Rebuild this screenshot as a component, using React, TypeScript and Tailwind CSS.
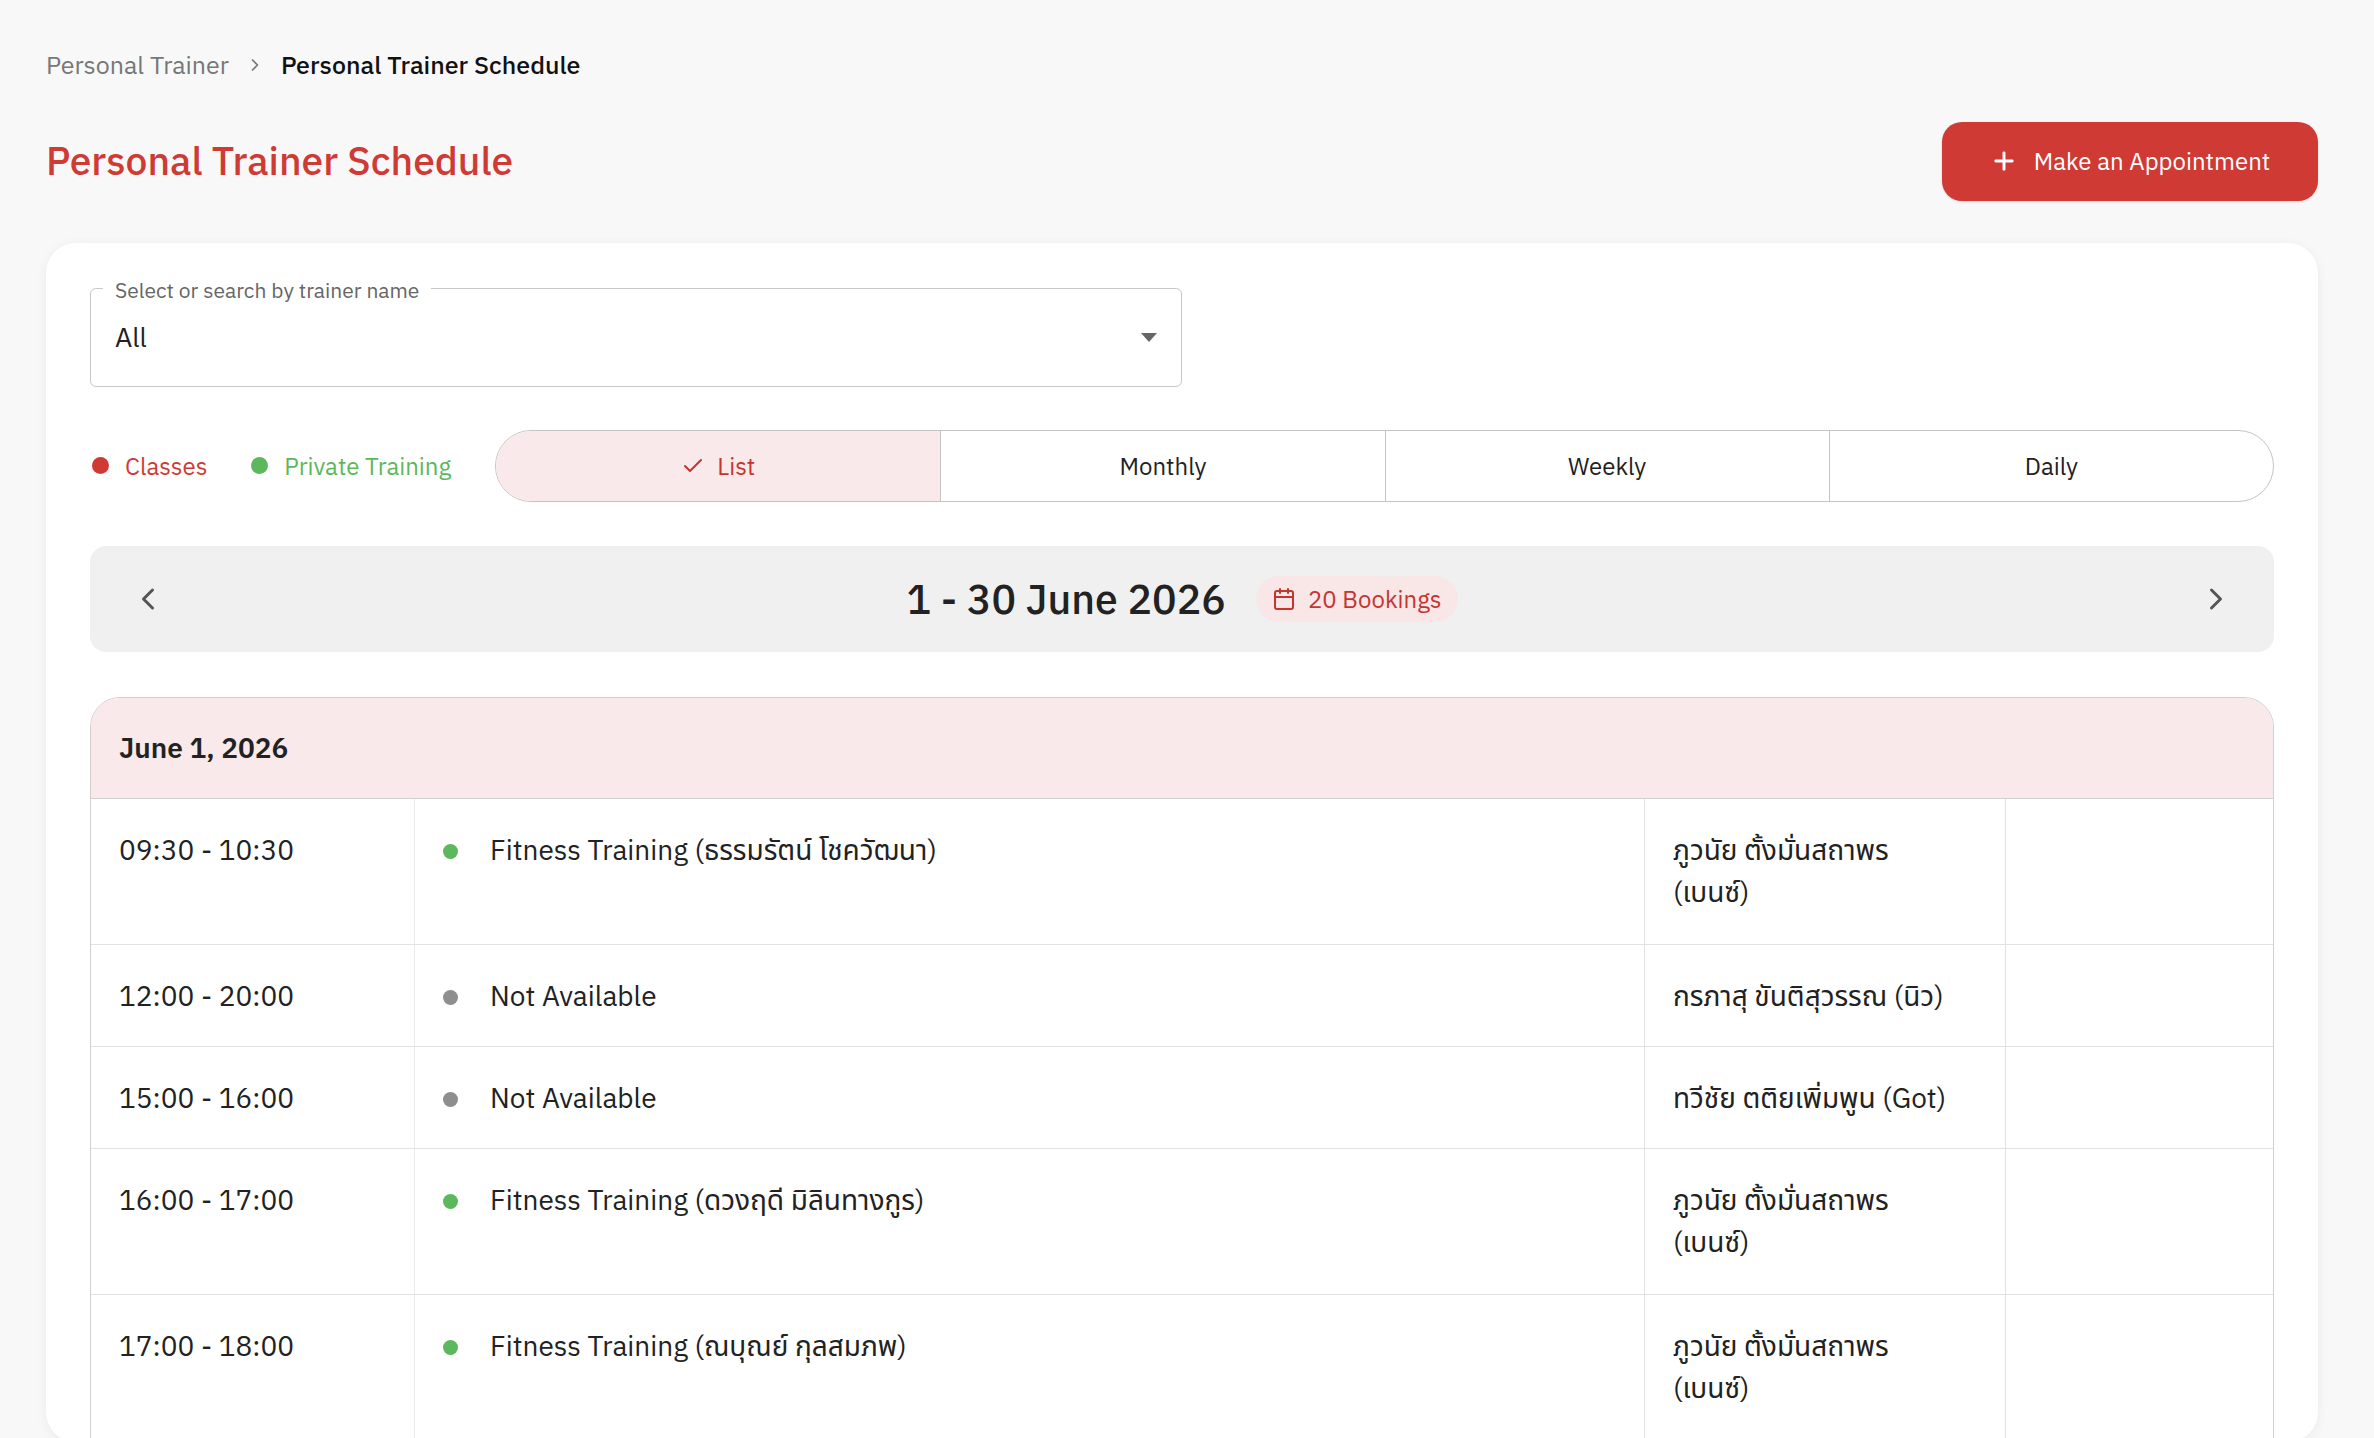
import { Calendar, Check, ChevronLeft, ChevronRight, Plus } from "lucide-react";

const rows = [
  { time: "09:30 - 10:30", dot: "bg-[#5cb85c]", title: "Fitness Training (ธรรมรัตน์ โชควัฒนา)", trainer: "ภูวนัย ตั้งมั่นสถาพร (เบนซ์)", tall: true },
  { time: "12:00 - 20:00", dot: "bg-[#8e8e8e]", title: "Not Available", trainer: "กรภาสุ ขันติสุวรรณ (นิว)", tall: false },
  { time: "15:00 - 16:00", dot: "bg-[#8e8e8e]", title: "Not Available", trainer: "ทวีชัย ตติยเพิ่มพูน (Got)", tall: false },
  { time: "16:00 - 17:00", dot: "bg-[#5cb85c]", title: "Fitness Training (ดวงฤดี มิลินทางกูร)", trainer: "ภูวนัย ตั้งมั่นสถาพร (เบนซ์)", tall: true },
  { time: "17:00 - 18:00", dot: "bg-[#5cb85c]", title: "Fitness Training (ณบุณย์ กุลสมภพ)", trainer: "ภูวนัย ตั้งมั่นสถาพร (เบนซ์)", tall: true },
];

export default function App() {
  return (
    <div
      className="h-[1438px] overflow-hidden bg-[#f8f8f8] pl-[46px] pr-[56px] pt-[46px] text-[#222]"
      style={{ fontFamily: '"IBM Plex Sans", "Noto Sans", "Noto Sans Thai", "DejaVu Sans", sans-serif' }}
    >
      <div className="flex items-center gap-4 text-[25px]">
        <span className="text-[#777]">Personal Trainer</span>
        <ChevronRight className="h-5 w-5 text-[#777]" />
        <span className="font-medium text-[#111]">Personal Trainer Schedule</span>
      </div>

      <div className="mt-[38px] flex items-center justify-between">
        <h1 className="text-[39px] font-medium text-[#d03a35]">Personal Trainer Schedule</h1>
        <button className="flex h-[79px] w-[376px] items-center justify-center gap-4 rounded-[20px] bg-[#d03a35] text-[24px] text-white shadow">
          <Plus className="h-7 w-7" strokeWidth={2.5} />
          Make an Appointment
        </button>
      </div>

      <div className="mt-[42px] rounded-[30px] bg-white px-[44px] pt-[45px] shadow-[0_2px_12px_rgba(0,0,0,0.06)]">
        <div className="relative h-[99px] w-[1092px] rounded-[6px] border border-[#c8c8c8]">
          <span className="absolute -top-[14px] left-[12px] bg-white px-[12px] text-[21px] text-[#666]">
            Select or search by trainer name
          </span>
          <div className="flex h-full items-center justify-between px-[24px]">
            <span className="text-[27px]">All</span>
            <span className="h-0 w-0 border-x-[8px] border-t-[9px] border-x-transparent border-t-[#666]" />
          </div>
        </div>

        <div className="mt-[43px] flex items-center">
          <div className="flex items-center gap-[16px] text-[24px]">
            <span className="ml-[2px] h-[17px] w-[17px] rounded-full bg-[#d03a35]" />
            <span className="text-[#d03a35]">Classes</span>
            <span className="ml-[28px] h-[17px] w-[17px] rounded-full bg-[#5cb85c]" />
            <span className="text-[#5cb85c]">Private Training</span>
          </div>
          <div className="ml-[44px] grid h-[72px] flex-1 grid-cols-4 overflow-hidden rounded-full border border-[#c4c4c4] text-[24px]">
            <div className="flex items-center justify-center gap-3 bg-[#f9e9ea] text-[#c5352f]">
              <Check className="h-6 w-6" strokeWidth={2} />
              List
            </div>
            <div className="flex items-center justify-center border-l border-[#c4c4c4]">Monthly</div>
            <div className="flex items-center justify-center border-l border-[#c4c4c4]">Weekly</div>
            <div className="flex items-center justify-center border-l border-[#c4c4c4]">Daily</div>
          </div>
        </div>

        <div className="mt-[44px] flex h-[106px] items-center justify-between rounded-[16px] bg-[#f0f0f0] px-[40px]">
          <ChevronLeft className="h-9 w-9 text-[#555]" strokeWidth={2} />
          <div className="flex items-center gap-[30px]">
            <span className="text-[41px] font-medium text-[#222]">1 - 30 June 2026</span>
            <span className="flex h-[46px] items-center gap-3 rounded-full bg-[#f9e6e7] px-[16px] text-[24px] text-[#c5352f]">
              <Calendar className="h-6 w-6" />
              20 Bookings
            </span>
          </div>
          <ChevronRight className="h-9 w-9 text-[#555]" strokeWidth={2} />
        </div>

        <div className="mt-[45px] overflow-hidden rounded-t-[30px] border border-[#d0d0d0]">
          <div className="flex h-[101px] items-center border-b border-[#d0d0d0] bg-[#f9e9ea] px-[28px] text-[28px] font-semibold">
            June 1, 2026
          </div>
          {rows.map((r) => (
            <div
              key={r.time}
              className={`grid grid-cols-[323px_1230px_361px_1fr] border-b border-[#e2e2e2] text-[28px] leading-[42px] ${r.tall ? "h-[146px]" : "h-[102px]"}`}
            >
              <div className="px-[28px] pt-[30px]">{r.time}</div>
              <div className="flex items-start gap-[32px] border-l border-[#ececec] px-[28px] pt-[30px]">
                <span className={`mt-[15px] h-[15px] w-[15px] shrink-0 rounded-full ${r.dot}`} />
                {r.title}
              </div>
              <div className="border-l border-[#e2e2e2] px-[28px] pt-[30px]">
                <div className="max-w-[285px]">{r.trainer}</div>
              </div>
              <div className="border-l border-[#e2e2e2]" />
            </div>
          ))}
        </div>
      </div>
    </div>
  );
}
